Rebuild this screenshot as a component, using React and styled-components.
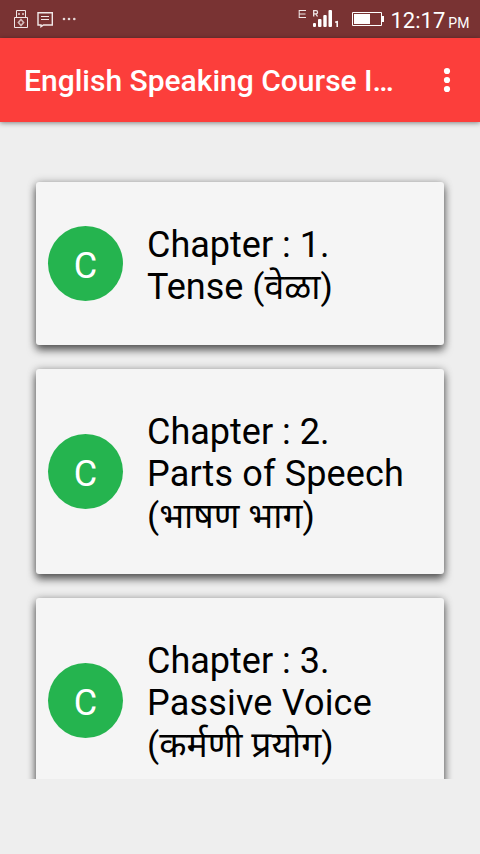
import styled, { createGlobalStyle } from 'styled-components';

const chapters = [
  { id: 1, name: 'Tense', local: '(वेळा)' },
  { id: 2, name: 'Parts of Speech', local: '(भाषण भाग)', spacing: 0.14, wrap: true },
  { id: 3, name: 'Passive Voice', local: '(कर्मणी प्रयोग)', spacing: 0.18, wrap: true },
];

function StatusBar() {
  return (
    <StyledStatusBar>
      <svg width='90' height='38' fill='none' stroke='#f1e8e8'>
        <path d='M16.5 17V10.5h9V17M14.5 17.5h13v10h-13z' />
        <path d='M18 14h2M22 14h2' strokeWidth='2' stroke='#c9a9a9' />
        <path d='M21 19.5l2.6 3-2.6 3-2.6-3z' stroke='#d5bcbc' strokeWidth='1.6' />
        <path d='M38 12.7h14.3v12.3H43.5L41 26.7v-1.7h-3z' strokeWidth='1.4' />
        <path d='M41 16.5h8M41 19.5h8' strokeWidth='1.2' />
        <g fill='#e5d8d8' stroke='none'>
          <circle cx='64' cy='19' r='1.3' />
          <circle cx='69' cy='19' r='1.3' />
          <circle cx='74.3' cy='19' r='1.3' />
        </g>
      </svg>
      <svg width='92.5' height='38' fill='#fff'>
        <path d='M8 10.5H1M8 17.5H1M1 14H7.5M1.2 10v8' fill='none' stroke='#f1e8e8' />
        <path d='M15.7 16.5V10.7H18a1.5 1.5 0 0 1 0 3.1H15.7M17.8 13.8L19.5 16.5' fill='none' stroke='#f1e8e8' strokeWidth='1.3' />
        <rect x='15' y='23' width='3' height='4' rx='1' />
        <rect x='20' y='19' width='3.5' height='8' rx='1' />
        <rect x='25.3' y='15' width='3.4' height='12' rx='1' />
        <rect x='30.5' y='10' width='3.5' height='17' rx='1' />
        <path d='M37.2 22.3l2-.6V27' fill='none' stroke='#fff' strokeWidth='1.5' />
        <path d='M54.5 12.5h29v13h-29z' fill='none' stroke='#fff' />
        <path d='M56 14h16v10H56zM84 16h2v6h-2z' />
      </svg>
      <Clock>12:17<small>PM</small></Clock>
    </StyledStatusBar>
  );
}

function ChapterCard(props) {
  const { id, name, local, spacing, wrap } = props.chapter;

  return (
    <StyledChapterCard>
      <Avatar>C</Avatar>
      <ChapterTitle>
        <div>Chapter : {id}.</div>
        <div>
          <Name $spacing={spacing}>{name}</Name>
          {!wrap && <>{' '}<LocalName>{local}</LocalName></>}
        </div>
        {wrap && <div><LocalName>{local}</LocalName></div>}
      </ChapterTitle>
    </StyledChapterCard>
  );
}

function App() {
  return (
    <Screen>
      <GlobalStyle />
      <StatusBar />
      <Toolbar>
        <h1>English Speaking Course I…</h1>
        <MenuButton aria-label='More options'>
          <svg width='8' height='26' fill='#fff'>
            <circle cx='4' cy='4' r='3.1' />
            <circle cx='4' cy='13' r='3.1' />
            <circle cx='4' cy='22' r='3.1' />
          </svg>
        </MenuButton>
      </Toolbar>
      <ChapterList>
        {chapters.map((chapter) => <ChapterCard key={chapter.id} chapter={chapter} />)}
      </ChapterList>
    </Screen>
  );
}

const GlobalStyle = createGlobalStyle`
  body{
    margin:0;
    background-color:#eeeeee;
    overflow:hidden;
  }
  *{
    box-sizing:border-box;
  }
`;

const Screen = styled.div`
  display:flex;
  flex-direction:column;
  width:480px;
  height:854px;
  background-color:#eeeeee;
  font-family:Roboto, "Noto Sans", "Noto Sans Devanagari", sans-serif;
`;

const StyledStatusBar = styled.div`
  display:flex;
  flex:none;
  height:38px;
  background-color:#793333;

  svg{
    flex:none;
  }
  svg:nth-child(2){
    margin-left:208px;
  }
`;

const Clock = styled.div`
  line-height:41px;
  font-size:22px;
  color:#fff;
  white-space:nowrap;

  small{
    margin-left:3px;
    font-size:14px;
  }
`;

const Toolbar = styled.div`
  display:flex;
  flex:none;
  align-items:center;
  justify-content:space-between;
  height:84px;
  padding:0 29px 0 24px;
  background-color:#fc3e3b;
  box-shadow:0 1px 5px rgba(0, 0, 0, 0.45);

  h1{
    margin:0;
    font-size:30px;
    font-weight:500;
    color:#fff;
    white-space:nowrap;
  }
`;

const MenuButton = styled.button`
  display:flex;
  padding:0;
  border:none;
  background-color:transparent;
  cursor:pointer;
`;

const ChapterList = styled.div`
  display:flex;
  flex-direction:column;
  gap:24px;
  height:609px;
  margin:48px 24px 0;
  padding:12px 12px 0;
  overflow:hidden;
`;

const StyledChapterCard = styled.div`
  display:flex;
  flex:none;
  align-items:center;
  gap:24px;
  padding:39.5px 12px;
  border-radius:3px;
  background-color:#f5f5f5;
  box-shadow:0 0 8px rgba(0, 0, 0, 0.25), 0 5px 9px rgba(0, 0, 0, 0.6);
`;

const Avatar = styled.div`
  flex:none;
  width:75px;
  height:75px;
  padding-top:3px;
  border-radius:50%;
  background-color:#25b44f;
  color:#fff;
  font-size:36px;
  line-height:75px;
  text-align:center;
`;

const ChapterTitle = styled.div`
  font-size:36px;
  line-height:46px;
  color:#000;
  white-space:nowrap;

  div{
    height:42px;
  }
`;

const Name = styled.span`
  letter-spacing:${(props) => props.$spacing || 0}px;
`;

const LocalName = styled.span`
  font-size:35.5px;
`;

export default App;
